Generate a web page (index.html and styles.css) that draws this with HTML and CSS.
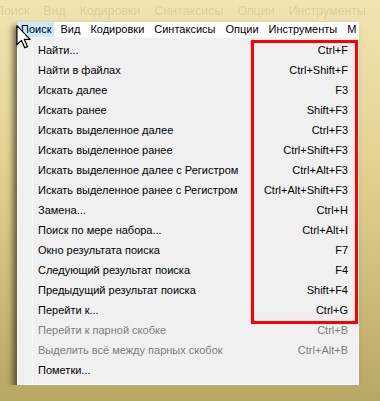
FILE: index.html
```html
<!doctype html>
<html lang="ru">
	<head>
		<meta charset="UTF-8">
		<title>Меню Поиск</title>
		<link rel="stylesheet" href="styles.css">
	</head>

	<body>
		<div class="scene">
			<!-- faded copy of the menu bar in the background -->
			<div class="ghost">
				<span>Поиск</span>
				<span>Вид</span>
				<span>Кодировки</span>
				<span>Синтаксисы</span>
				<span>Опции</span>
				<span>Инструменты</span>
				<span>М</span>
			</div>

			<div class="window">
				<div class="menubar">
					<span class="active">Поиск</span>
					<span>Вид</span>
					<span>Кодировки</span>
					<span>Синтаксисы</span>
					<span>Опции</span>
					<span>Инструменты</span>
					<span>М</span>
				</div>

				<div class="dropdown">
					<div class="item"><span>Найти...</span><span>Ctrl+F</span></div>
					<div class="item"><span>Найти в файлах</span><span>Ctrl+Shift+F</span></div>
					<div class="item"><span>Искать далее</span><span>F3</span></div>
					<div class="item"><span>Искать ранее</span><span>Shift+F3</span></div>
					<div class="item"><span>Искать выделенное далее</span><span>Ctrl+F3</span></div>
					<div class="item"><span>Искать выделенное ранее</span><span>Ctrl+Shift+F3</span></div>
					<div class="item"><span>Искать выделенное далее с Регистром</span><span>Ctrl+Alt+F3</span></div>
					<div class="item"><span>Искать выделенное ранее с Регистром</span><span>Ctrl+Alt+Shift+F3</span></div>
					<div class="item"><span>Замена...</span><span>Ctrl+H</span></div>
					<div class="item"><span>Поиск по мере набора...</span><span>Ctrl+Alt+I</span></div>
					<div class="item"><span>Окно результата поиска</span><span>F7</span></div>
					<div class="item"><span>Следующий результат поиска</span><span>F4</span></div>
					<div class="item"><span>Предыдущий результат поиска</span><span>Shift+F4</span></div>
					<div class="item"><span>Перейти к...</span><span>Ctrl+G</span></div>
					<div class="item disabled"><span>Перейти к парной скобке</span><span>Ctrl+B</span></div>
					<div class="item disabled"><span>Выделить всё между парных скобок</span><span>Ctrl+Alt+B</span></div>
					<div class="item"><span>Пометки...</span><span></span></div>

					<div class="highlight"></div>
				</div>

				<svg class="cursor" width="15" height="24" viewBox="0 0 12 20">
					<path d="M0.5 0.5 L0.5 16.5 L4.3 12.8 L7 19 L9.3 18 L6.7 12 L11.5 12 Z" fill="#fff" stroke="#000" stroke-width="1" stroke-linejoin="round"/>
				</svg>
			</div>
		</div>
	</body>
</html>
```

FILE: styles.css
```css
* {
	padding: 0;
	margin: 0;
	box-sizing: border-box;
}
body {
	width: 380px;
	height: 401px;
	overflow: hidden;
	background: linear-gradient(to bottom, #f1e4b2 0%, #e4d292 40%, #c9b874 78%, #b7a764 100%);
	font-family: "Liberation Sans", Arial, sans-serif;
	font-size: 11px;
	color: #000;
}
.scene {
	padding-top: 3px;
	overflow: hidden;
}
.ghost {
	display: flex;
	height: 16px;
	line-height: 16px;
	margin-left: -12px;
	font-size: 12.4px;
	color: #c9b57a;
	opacity: 0.45;
	filter: blur(0.6px);
	white-space: nowrap;
	overflow: hidden;
}
.ghost span {
	padding: 0 7px;
}
.window {
	position: relative;
	width: 342px;
	margin: 3px 0 0 17px;
	box-shadow: -4px 4px 6px rgba(30, 20, 0, 0.6);
}
.menubar {
	display: flex;
	height: 15px;
	line-height: 15px;
	background: #fff;
	white-space: nowrap;
	overflow: hidden;
}
.menubar span {
	padding: 0 5px;
}
.menubar .active {
	background: #cce8ff;
	padding: 0 3px 0 4px;
	margin-right: 1px;
}
.dropdown {
	position: relative;
	background: #f0f0f0;
	border: 1px solid #fafafa;
	padding: 2px 0 4px 0;
	background-image: linear-gradient(to right, transparent 14px, #fcfcfc 14px, #fcfcfc 15px, transparent 15px);
}
.item {
	display: flex;
	justify-content: space-between;
	height: 20px;
	line-height: 20px;
	padding: 0 10px 0 20px;
	white-space: nowrap;
}
.item.disabled {
	color: #7d7d7d;
}
.highlight {
	position: absolute;
	left: 233px;
	top: 2px;
	width: 107px;
	height: 284px;
	border: 3px solid #f00;
}
.cursor {
	position: absolute;
	left: -1px;
	top: 3px;
}
```
